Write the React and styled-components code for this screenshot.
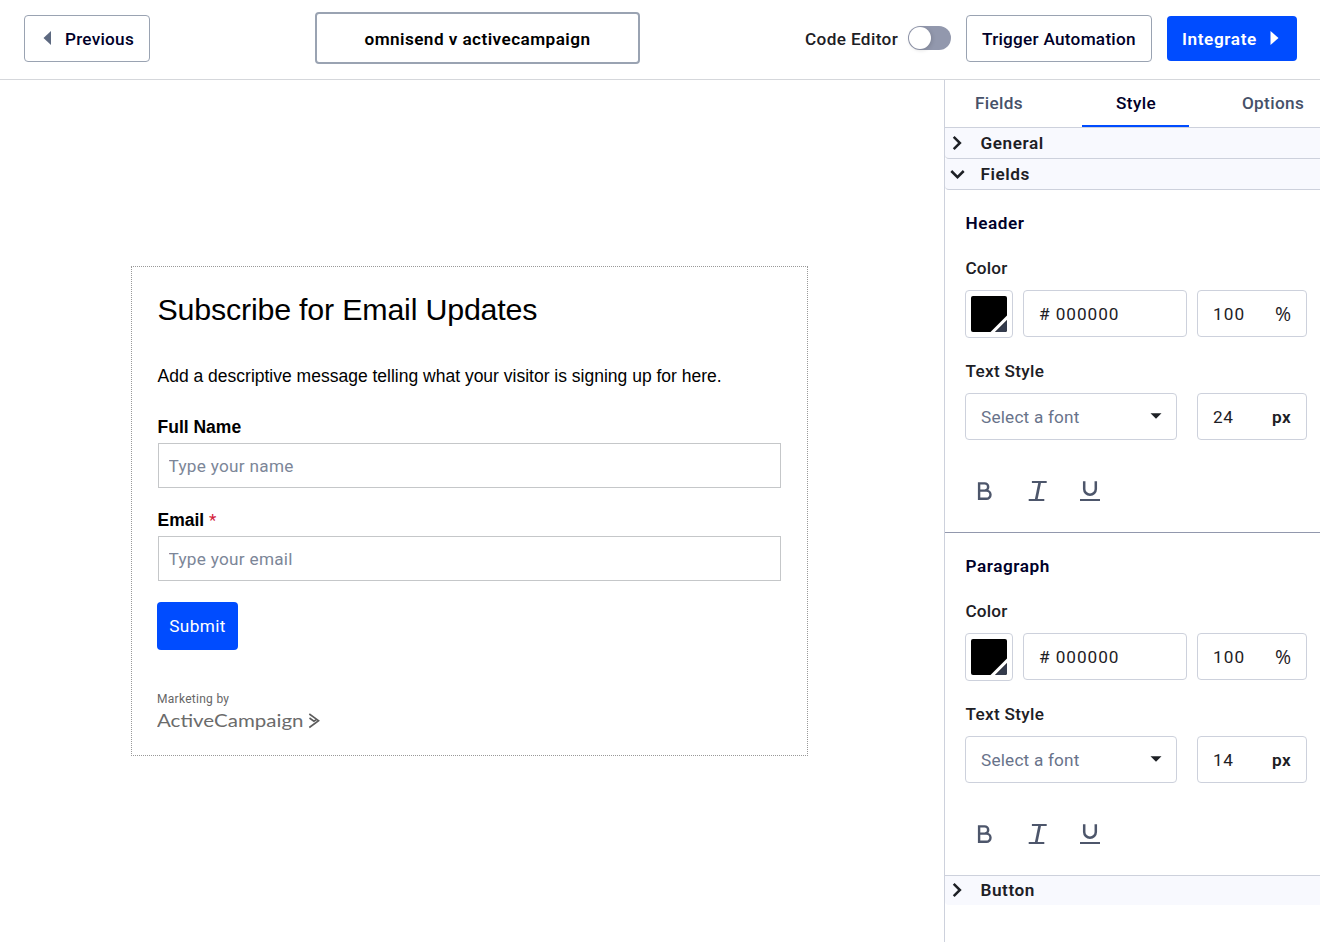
import React, { useState } from 'react';
import styled, { createGlobalStyle } from 'styled-components';


const CaretLeft = () => (
    <svg width="9" height="16" viewBox="0 0 9 16"><path d="M8 1v14L0.5 8z" fill="#5d6980"/></svg>
);

const CaretRight = () => (
    <svg width="9" height="16" viewBox="0 0 9 16"><path d="M0.5 1v14L8.5 8z" fill="#fff"/></svg>
);

const CaretDown = () => (
    <svg width="12" height="6" viewBox="0 0 12 6"><path d="M0.5 0.3h11L6 5.8z" fill="#1d2025"/></svg>
);

const Chevron = ({ open }) => (
    <svg width="16" height="16" viewBox="0 0 16 16" fill="none" stroke="#1d2025" strokeWidth="2.5">
        <path d={open ? 'M2.3 5l6.2 6.2L14.7 5' : 'M4.7 1.8l6.2 6.2-6.2 6.2'}/>
    </svg>
);

const BoldIcon = () => (
    <svg width="24" height="24" viewBox="0 0 24 24" fill="none" stroke="#4d566b" strokeWidth="2.4">
        <path d="M6.1 4.4h5.5a3.6 3.6 0 0 1 0 7.2H6.1M11.6 11.6h1.8a4.1 4.1 0 0 1 0 8.2H6.1V3.3"/>
    </svg>
);

const ItalicIcon = () => (
    <svg width="24" height="24" viewBox="0 0 24 24" fill="none" stroke="#4d566b">
        <path strokeWidth="2" d="M5.9 3h14.8M2.7 21h15.6"/>
        <path strokeWidth="2.7" d="M13.8 3L10.1 21"/>
    </svg>
);

const UnderlineIcon = () => (
    <svg width="24" height="24" viewBox="0 0 24 24" fill="none" stroke="#4d566b">
        <path strokeWidth="2.5" d="M6.2 2.3v7.6a5.8 5.8 0 0 0 11.6 0V2.3"/>
        <path strokeWidth="2" d="M2 21h20"/>
    </svg>
);

const Brand = () => (
    <svg width="166" height="32" viewBox="0 -4 166 32">
        <text x="0" y="16.5" fontFamily="Lato, sans-serif" fontSize="18" fill="#6b6b6b" textLength="146.5" lengthAdjust="spacingAndGlyphs">ActiveCampaign</text>
        <path d="M152.3 4l9.3 6.7-9.3 6.8M152.5 8l4.4 3.2 2.8-1.8" fill="none" stroke="#5c5c5c" strokeWidth="1.6"/>
    </svg>
);

const TextSettings = ({ title, size, last }) => (
    <Settings $last={last}>
        <SettingsTitle>{title}</SettingsTitle>
        <SettingLabel $track={0.15}>Color</SettingLabel>
        <Controls>
            <Swatch>
                <svg width="36" height="36" viewBox="0 0 36 36">
                    <rect width="36" height="36" rx="2" fill="#000"/>
                    <path d="M19.5 36L36 19.5V24L24 36z" fill="#fff"/>
                    <path d="M24.5 36L36 24.5V34a2 2 0 0 1-2 2z" fill="#343b4c"/>
                </svg>
            </Swatch>
            <Field $width={164}><Text $track={0.95}># 000000</Text></Field>
            <Field $width={110}><Text $track={1.1}>100</Text><Percent>%</Percent></Field>
        </Controls>
        <SettingLabel $track={0.3}>Text Style</SettingLabel>
        <Controls>
            <Field $width={212}>
                <Text $color="#68738a" $track={0.2}>Select a font</Text>
                <CaretDown/>
            </Field>
            <Field $width={110} $push={10}><Text $track={0.5}>{size}</Text><Text $weight={600} $track={0.4}>px</Text></Field>
        </Controls>
        <Formats>
            <FormatButton aria-label="Bold"><BoldIcon/></FormatButton>
            <FormatButton aria-label="Italic"><ItalicIcon/></FormatButton>
            <FormatButton aria-label="Underline"><UnderlineIcon/></FormatButton>
        </Formats>
    </Settings>
);

const App = () => {
    const [tab, setTab] = useState('Style');

    return (
        <Page>
            <GlobalStyle/>
            <TopBar>
                <OutlineButton $width={126}><CaretLeft/><Text $weight={500} $track={0.25}>Previous</Text></OutlineButton>
                <FormName><Text $weight={600} $track={0.43}>omnisend v activecampaign</Text></FormName>
                <Actions>
                    <Text $weight={500} $track={0.36} $color="#1d2025">Code Editor</Text>
                    <Toggle role="switch" aria-checked="false" aria-label="Code Editor"/>
                    <OutlineButton $width={186}><Text $weight={500} $track={0.26}>Trigger Automation</Text></OutlineButton>
                    <PrimaryButton><Text $weight={600} $track={0.6}>Integrate</Text><CaretRight/></PrimaryButton>
                </Actions>
            </TopBar>
            <Body>
                <Canvas>
                    <Form>
                        <FormTitle>Subscribe for Email Updates</FormTitle>
                        <FormText>Add a descriptive message telling what your visitor is signing up for here.</FormText>
                        <FormLabel $top={27}>Full Name</FormLabel>
                        <FormInput placeholder="Type your name"/>
                        <FormLabel $top={20}>Email <i>*</i></FormLabel>
                        <FormInput placeholder="Type your email"/>
                        <Submit>Submit</Submit>
                        <Marketing>Marketing by</Marketing>
                        <Brand/>
                    </Form>
                </Canvas>
                <Sidebar>
                    <Tabs>
                        {['Fields', 'Style', 'Options'].map(name => (
                            <Tab key={name} $active={tab === name} onClick={() => setTab(name)}>{name}</Tab>
                        ))}
                    </Tabs>
                    <Accordion><Chevron/>General</Accordion>
                    <Accordion><Chevron open/>Fields</Accordion>
                    <TextSettings title="Header" size="24"/>
                    <TextSettings title="Paragraph" size="14" last/>
                    <Accordion $end><Chevron/>Button</Accordion>
                </Sidebar>
            </Body>
        </Page>
    );
};

export default App;

const GlobalStyle = createGlobalStyle`
    *{
        box-sizing: border-box;
    }
    body{
        margin: 0;
        background: #fff;
        overflow: hidden;
    }
    body, button, input{
        font-family: Roboto, sans-serif;
        font-size: 17.2px;
    }
    svg{
        display: block;
        flex-shrink: 0;
    }
`;

const Page = styled.div`
    width: 1320px;
    height: 942px;
    display: flex;
    flex-direction: column;
    color: #000029;
`;

const Text = styled.span`
    font-weight: ${({ $weight = 400 }) => $weight};
    letter-spacing: ${({ $track = 0 }) => $track}px;
    color: ${({ $color = 'inherit' }) => $color};
    white-space: nowrap;
`;

const Percent = styled.span`
    font: 400 19.5px/24px "Open Sans", sans-serif;
`;

const TopBar = styled.header`
    height: 80px;
    flex-shrink: 0;
    display: flex;
    align-items: flex-start;
    padding: 12px 23px 0 24px;
    border-bottom: 1px solid #d5d7db;
`;

const OutlineButton = styled.button`
    width: ${({ $width }) => $width}px;
    height: 47px;
    margin-top: 3px;
    padding: 0 15px;
    display: flex;
    align-items: center;
    justify-content: space-between;
    border: 1px solid #9aa3b2;
    border-radius: 4px;
    background: #fff;
    color: #000029;

    svg{
        margin: -2px 0 0 3px;
    }
`;

const FormName = styled.div`
    width: 325px;
    height: 52px;
    margin-left: 165px;
    padding-top: 1px;
    display: flex;
    align-items: center;
    justify-content: center;
    border: 2px solid #9aa3b2;
    border-radius: 4px;
    color: #000;
`;

const Actions = styled.div`
    display: flex;
    align-items: flex-start;
    margin-left: auto;

    > span{
        width: 93px;
        margin-right: 10px;
        line-height: 54px;
    }
`;

const Toggle = styled.button`
    width: 43px;
    height: 24px;
    margin: 14px 15px 0 0;
    padding: 1px;
    border: 0;
    border-radius: 12px;
    background: #9298ad;

    &::before{
        content: '';
        display: block;
        width: 22px;
        height: 22px;
        border-radius: 11px;
        background: #fff;
        box-shadow: 1px 1px 4px rgba(0, 0, 0, 0.15);
    }
`;

const PrimaryButton = styled.button`
    width: 130px;
    height: 45px;
    margin: 4px 0 0 15px;
    padding: 0 18px 0 15px;
    display: flex;
    align-items: center;
    justify-content: space-between;
    border: 0;
    border-radius: 4px;
    background: #004cff;
    color: #fff;

    svg{
        margin-top: -2px;
    }
`;

const Body = styled.div`
    flex: 1;
    display: flex;
`;

const Canvas = styled.main`
    width: 944px;
    padding: 186px 0 0 131px;
`;

const Form = styled.section`
    width: 677px;
    height: 490px;
    padding: 23px 26px 0;
    border: 1px dotted #999;
    color: #000;
`;

const FormTitle = styled.h1`
    margin: 0 0 0 -0.5px;
    font: 400 30.4px/38px "Liberation Sans", Arial, sans-serif;
    letter-spacing: -0.2px;
`;

const FormText = styled.p`
    margin: 36px 0 0 -0.5px;
    font: 400 17.5px/24px "Liberation Sans", Arial, sans-serif;
    white-space: nowrap;
`;

const FormLabel = styled.label`
    display: block;
    margin: ${({ $top }) => $top}px 0 4px -0.5px;
    font: 700 17.5px/24px "Liberation Sans", Arial, sans-serif;

    i{
        font: 400 17px/20px Roboto, sans-serif;
        color: #d3203a;
    }
`;

const FormInput = styled.input`
    display: block;
    width: 623px;
    height: 45px;
    padding: 0 9.5px;
    border: 1px solid #c5c7c9;
    outline: none;
    letter-spacing: 0.28px;

    &::placeholder{
        color: #7c8698;
        opacity: 1;
    }
`;

const Submit = styled.button`
    display: block;
    width: 81px;
    height: 48px;
    margin: 21px 0 0 -1px;
    padding: 0;
    border: 0;
    border-radius: 4px;
    background: #004cff;
    color: #fff;
    letter-spacing: 0.4px;
`;

const Marketing = styled.div`
    margin: 41px 0 0 -1px;
    font-size: 12px;
    line-height: 16px;
    letter-spacing: 0.28px;
    color: #666;

    + svg{
        margin: -1px 0 0 -1px;
    }
`;

const Sidebar = styled.aside`
    width: 376px;
    border-left: 1px solid #cdd1dc;
`;

const Tabs = styled.nav`
    height: 48px;
    display: grid;
    grid-template-columns: 107px 107px 107px;
    column-gap: 30px;
    border-bottom: 1px solid #cdd1dc;
`;

const Tab = styled.button`
    height: 47px;
    padding: 0 0 0 1px;
    border: 0;
    border-bottom: 2px solid ${({ $active }) => $active ? '#004cff' : 'transparent'};
    background: none;
    font-weight: 500;
    letter-spacing: 0.35px;
    color: ${({ $active }) => $active ? '#000029' : '#465169'};
`;

const Accordion = styled.div`
    height: ${({ $end }) => $end ? 29 : 31}px;
    padding: 0 0 ${({ $end }) => $end ? 2 : 0}px 4px;
    display: flex;
    align-items: center;
    gap: 15.5px;
    border-bottom: ${({ $end }) => $end ? 0 : '1px solid #cdd1dc'};
    border-radius: 0 0 0 4px;
    background: #f8f9fe;
    font-weight: 600;
    letter-spacing: 0.55px;
    color: #1d2025;
`;

const Settings = styled.section`
    height: 343px;
    padding: 21px 0 0 20px;
    border-bottom: 1px solid ${({ $last }) => $last ? '#cdd1dc' : '#9298ad'};
    color: #1d2025;
`;

const SettingsTitle = styled.h2`
    margin: 0 0 0 0.5px;
    font-size: 17.2px;
    line-height: 24px;
    font-weight: 600;
    letter-spacing: 0.55px;
    color: #000029;
`;

const SettingLabel = styled.div`
    margin: 21px 0 10px 0.5px;
    font-weight: 500;
    line-height: 24px;
    letter-spacing: ${({ $track }) => $track}px;
`;

const Controls = styled.div`
    display: flex;
    gap: 10px;
`;

const Swatch = styled.div`
    width: 48px;
    height: 48px;
    padding: 5px;
    border: 1px solid #cdd1dc;
    border-radius: 4px;
`;

const Field = styled.div`
    width: ${({ $width }) => $width}px;
    height: 47px;
    margin-left: ${({ $push = 0 }) => $push}px;
    padding: 0 15px;
    display: flex;
    align-items: center;
    justify-content: space-between;
    border: 1px solid #cdd1dc;
    border-radius: 4px;

    svg{
        margin: -1px -1px 0 0;
    }
`;

const Formats = styled.div`
    display: flex;
    gap: 28.5px;
    margin: 39px 0 0 8px;
`;

const FormatButton = styled.button`
    padding: 0;
    border: 0;
    background: none;
`;
